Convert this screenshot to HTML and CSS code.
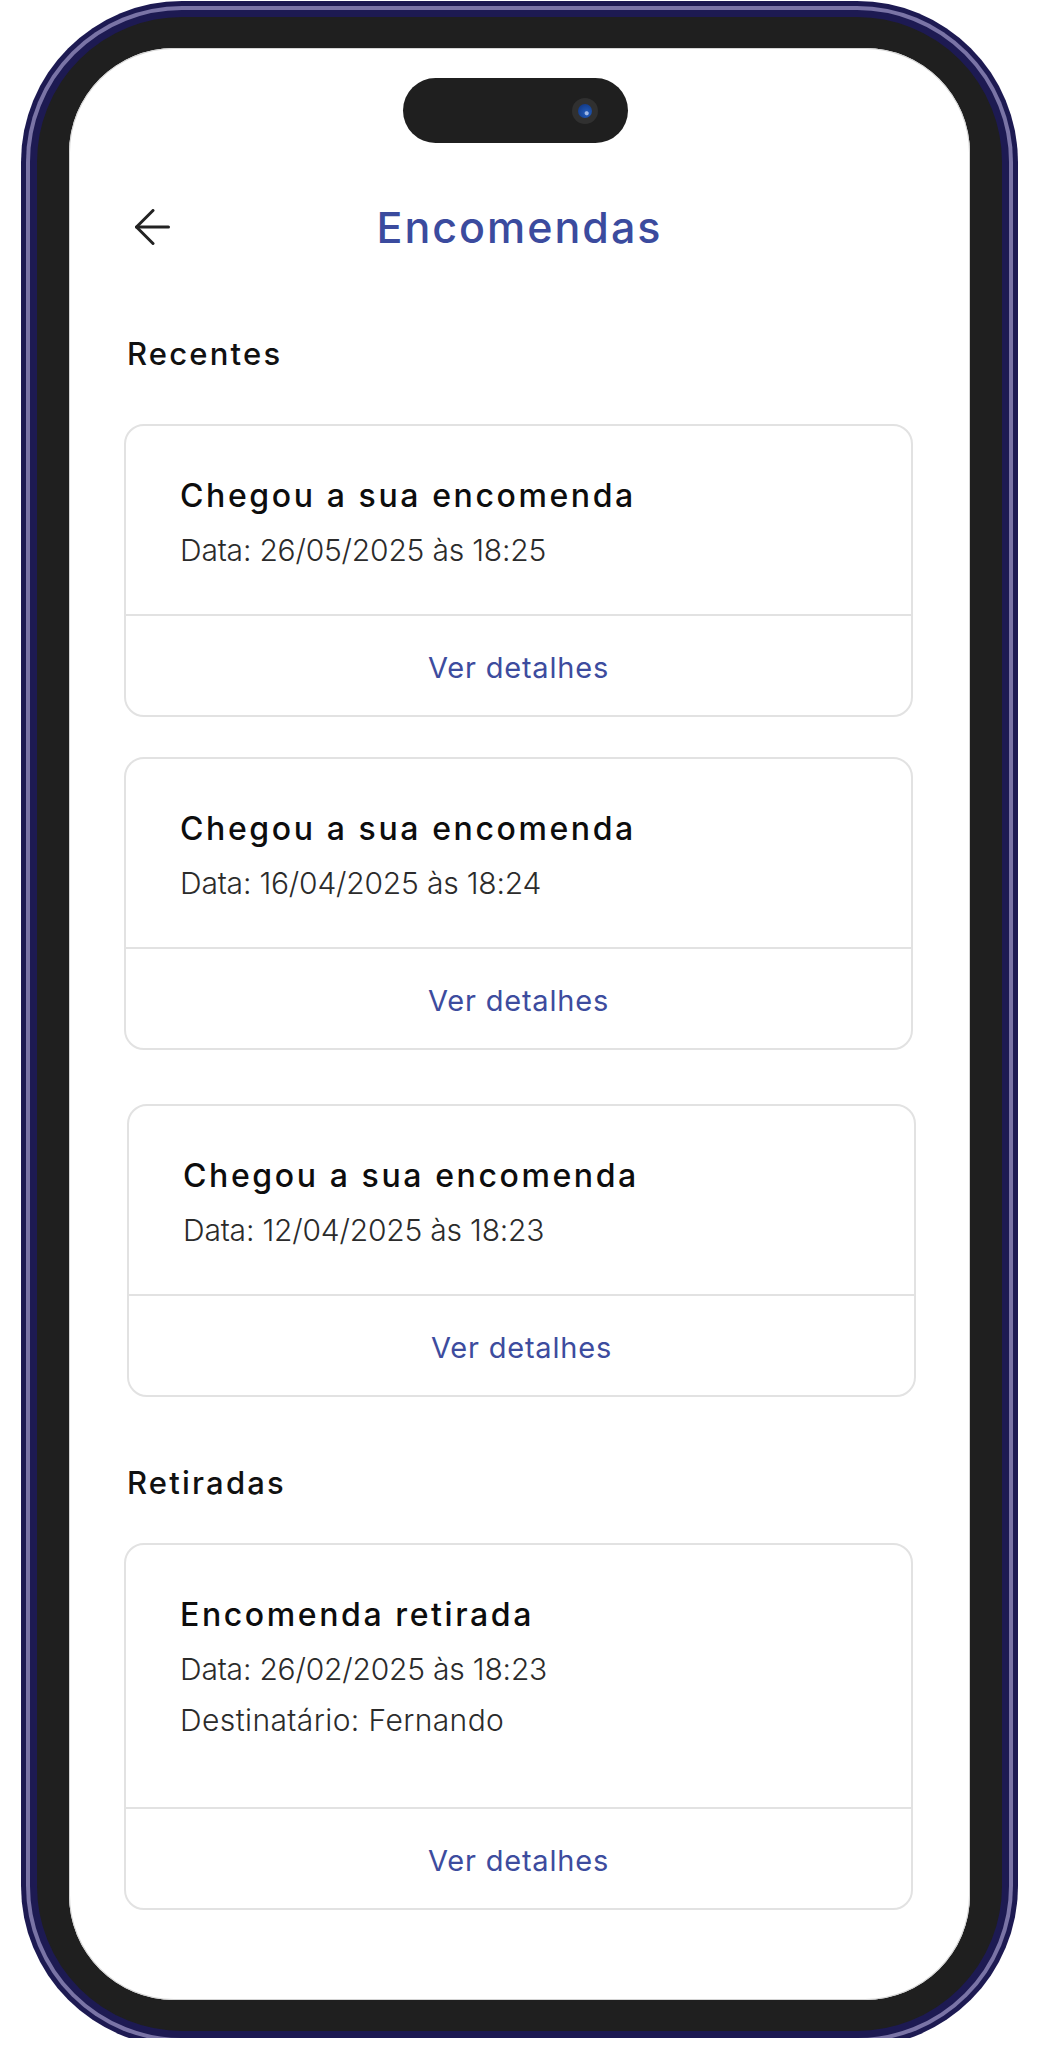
FILE: index.html
```html
<!DOCTYPE html>
<html lang="pt-BR">
<head>
    <meta charset="UTF-8">
    <meta name="viewport" content="width=device-width, initial-scale=1.0">
    <title>Encomendas</title>
    <link rel="stylesheet" href="styles.css">
</head>
<body>
    <div class="phone">
        <div class="screen">
            <div class="island"><span class="camera"></span></div>

            <header class="topbar">
                <button class="back" type="button" aria-label="Voltar">
                    <svg width="36" height="36" viewBox="0 0 36 36" fill="none" stroke="#222" stroke-width="3" stroke-linecap="round" stroke-linejoin="round">
                        <path d="M2.5 18H34.5"/>
                        <path d="M19 1.5L2.5 18L19 34.5"/>
                    </svg>
                </button>
                <h1>Encomendas</h1>
                <span></span>
            </header>

            <main class="content">
                <h2 class="section-title">Recentes</h2>

                <div class="card">
                    <div class="card-body">
                        <h3 class="card-title">Chegou a sua encomenda</h3>
                        <p class="card-info">Data: 26/05/2025 às 18:25</p>
                    </div>
                    <div class="card-footer"><a href="#" class="details-link">Ver detalhes</a></div>
                </div>

                <div class="card">
                    <div class="card-body">
                        <h3 class="card-title">Chegou a sua encomenda</h3>
                        <p class="card-info">Data: 16/04/2025 às 18:24</p>
                    </div>
                    <div class="card-footer"><a href="#" class="details-link">Ver detalhes</a></div>
                </div>

                <div class="card offset">
                    <div class="card-body">
                        <h3 class="card-title">Chegou a sua encomenda</h3>
                        <p class="card-info">Data: 12/04/2025 às 18:23</p>
                    </div>
                    <div class="card-footer"><a href="#" class="details-link">Ver detalhes</a></div>
                </div>

                <h2 class="section-title second">Retiradas</h2>

                <div class="card">
                    <div class="card-body tall">
                        <h3 class="card-title">Encomenda retirada</h3>
                        <p class="card-info">Data: 26/02/2025 às 18:23</p>
                        <p class="card-info near">Destinatário: Fernando</p>
                    </div>
                    <div class="card-footer"><a href="#" class="details-link">Ver detalhes</a></div>
                </div>
            </main>
        </div>
    </div>
</body>
</html>
```

FILE: styles.css
```css
body {
    margin: 0;
    background-color: #fff;
    font-family: Inter, "Noto Sans", sans-serif;
}
.phone {
    box-sizing: border-box;
    width: 979px;
    height: 2028px;
    margin: 10px 0 0 30px;
    padding: 31px 32px;
    border: 7px solid #1d1a52;
    border-radius: 152px;
    background-color: #1f1f1f;
    box-shadow: 0 0 0 4px #7a74a6, 0 0 0 9px #1d1a52;
}
.screen {
    height: 1952px;
    background-color: #fff;
    border-radius: 105px;
    overflow: hidden;
    box-shadow: inset 0 0 0 1px #d4d4d4;
}
.island {
    display: flex;
    justify-content: flex-end;
    align-items: center;
    width: 225px;
    height: 65px;
    margin: 30px 0 0 334px;
    padding-right: 30px;
    box-sizing: border-box;
    border-radius: 33px;
    background-color: #1f1f1f;
}
.camera {
    display: flex;
    justify-content: center;
    align-items: center;
    width: 26px;
    height: 26px;
    border-radius: 50%;
    background-color: #303030;
}
.camera::after {
    content: "";
    width: 14px;
    height: 14px;
    border-radius: 50%;
    background: radial-gradient(circle at 62% 66%, #9fb8e6 0 12%, #1f55b0 20%, #0d2f78 100%);
}
.topbar {
    display: grid;
    grid-template-columns: 1fr auto 1fr;
    align-items: center;
    height: 70px;
    margin-top: 49px;
    padding: 0 65px;
}
.back {
    display: flex;
    width: 36px;
    height: 36px;
    padding: 0;
    border: none;
    background: none;
    cursor: pointer;
}
.topbar h1 {
    margin: 0;
    font-size: 43px;
    font-weight: 500;
    line-height: 1;
    letter-spacing: 2px;
    color: #3b4b9e;
}
.content {
    padding: 75px 57px 0 55px;
}
.section-title {
    margin: 0 0 53px 3px;
    font-size: 31px;
    font-weight: 500;
    line-height: 34px;
    letter-spacing: 2.2px;
    color: #111;
}
.section-title.second {
    margin-top: 69px;
    margin-bottom: 43px;
}
.card {
    border: 2px solid #e2e2e2;
    border-radius: 20px;
}
.card + .card {
    margin-top: 40px;
}
.card.offset {
    margin: 54px -3px 0 3px;
}
.card-body {
    padding: 51px 55px 45px 54px;
}
.card-body.tall {
    padding-bottom: 68px;
}
.card-title {
    margin: 0;
    font-size: 32px;
    font-weight: 500;
    line-height: 38px;
    letter-spacing: 2.6px;
    color: #0d0d0d;
}
.card-info {
    margin: 16px 0 0;
    font-size: 30px;
    font-weight: 300;
    line-height: 38px;
    letter-spacing: -0.2px;
    color: #2b2b2b;
}
.card-info.near {
    margin-top: 13px;
    letter-spacing: 0.4px;
}
.card-footer {
    padding: 33px 0 28px;
    border-top: 2px solid #e2e2e2;
    text-align: center;
}
.details-link {
    font-size: 29px;
    line-height: 38px;
    letter-spacing: 0.8px;
    color: #3d4c9e;
    text-decoration: none;
}
```
